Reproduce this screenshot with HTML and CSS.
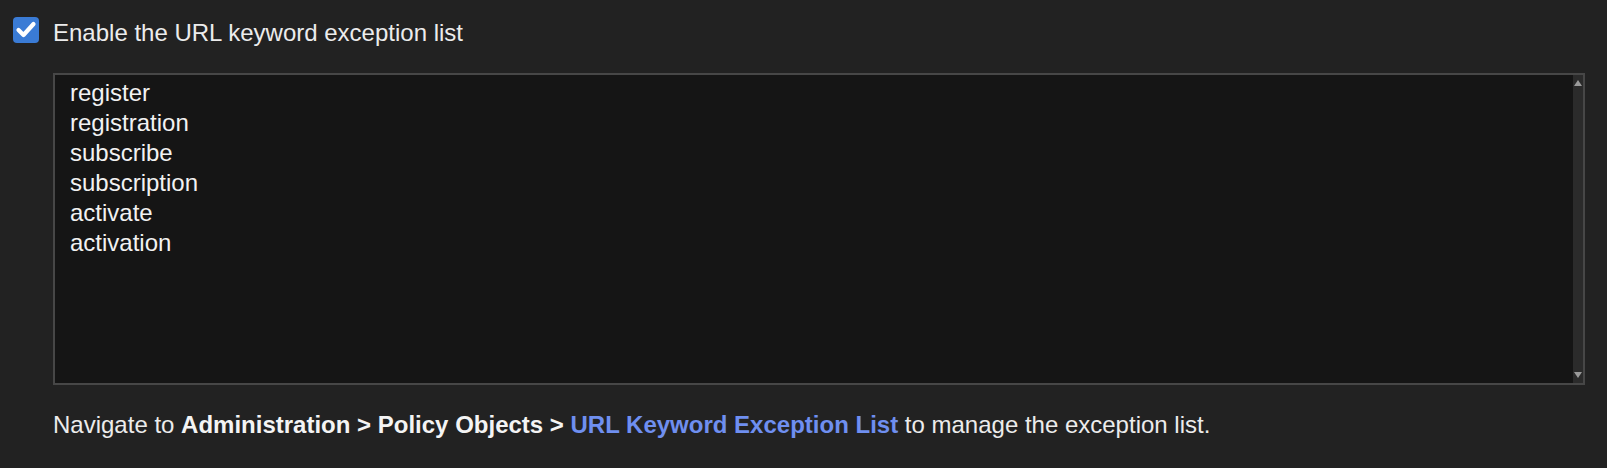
FILE: index.html
```html
<!DOCTYPE html>
<html lang="en">
<head>
<meta charset="utf-8">
<title>URL keyword exception list</title>
<link rel="stylesheet" href="styles.css">
</head>
<body>
<div class="panel">
  <label class="check-row">
    <span class="checkbox">
      <svg width="26" height="26" viewBox="0 0 26 26" aria-hidden="true">
        <polyline points="5.5,13 10.5,18 20.5,7" fill="none" stroke="#ffffff" stroke-width="4.2" stroke-linecap="round" stroke-linejoin="round"/>
      </svg>
    </span>
    <span class="check-label">Enable the URL keyword exception list</span>
  </label>

  <div class="textbox">
    <div class="lines">
      <div>register</div>
      <div>registration</div>
      <div>subscribe</div>
      <div>subscription</div>
      <div>activate</div>
      <div>activation</div>
    </div>
    <div class="scrollbar">
      <span class="arrow up"></span>
      <span class="arrow down"></span>
    </div>
  </div>

  <p class="hint">Navigate to <b>Administration &gt; Policy Objects &gt;</b> <a class="link" href="#">URL Keyword Exception List</a> to manage the exception list.</p>
</div>
</body>
</html>
```

FILE: styles.css
```css
html, body {
  margin: 0;
  padding: 0;
  background: #222222;
}

body {
  font-family: "Liberation Sans", Arial, sans-serif;
  font-size: 24px;
  color: #ececec;
  width: 1607px;
  height: 468px;
  overflow: hidden;
}

.panel {
  padding: 17px 22px 0 13px;
}

.check-row {
  display: flex;
  align-items: flex-start;
  gap: 14px;
}

.checkbox {
  width: 26px;
  height: 26px;
  border-radius: 4px;
  background: #3a7bd5;
  display: block;
  flex: none;
}

.checkbox svg {
  display: block;
}

.check-label {
  margin-top: 2px;
  line-height: 28px;
  color: #ececec;
}

.textbox {
  margin: 26px 0 0 40px;
  height: 308px;
  border: 2px solid #474747;
  background: #151515;
  display: flex;
}

.lines {
  flex: 1;
  padding: 3px 0 0 15px;
  line-height: 30px;
  color: #f2f2f2;
}

.scrollbar {
  width: 10px;
  background: #2b2b2b;
  display: flex;
  flex-direction: column;
  justify-content: space-between;
  align-items: center;
  padding: 5px 0 5px;
}

.arrow {
  width: 0;
  height: 0;
  border-left: 4px solid transparent;
  border-right: 4px solid transparent;
}

.arrow.up {
  border-bottom: 6px solid #9a9a9a;
}

.arrow.down {
  border-top: 6px solid #9a9a9a;
}

.hint {
  margin: 26px 0 0 40px;
  line-height: 28px;
  color: #ececec;
}

.hint b {
  font-weight: bold;
  color: #f4f4f4;
}

.link {
  color: #6f8ff0;
  font-weight: bold;
  text-decoration: none;
}
```
